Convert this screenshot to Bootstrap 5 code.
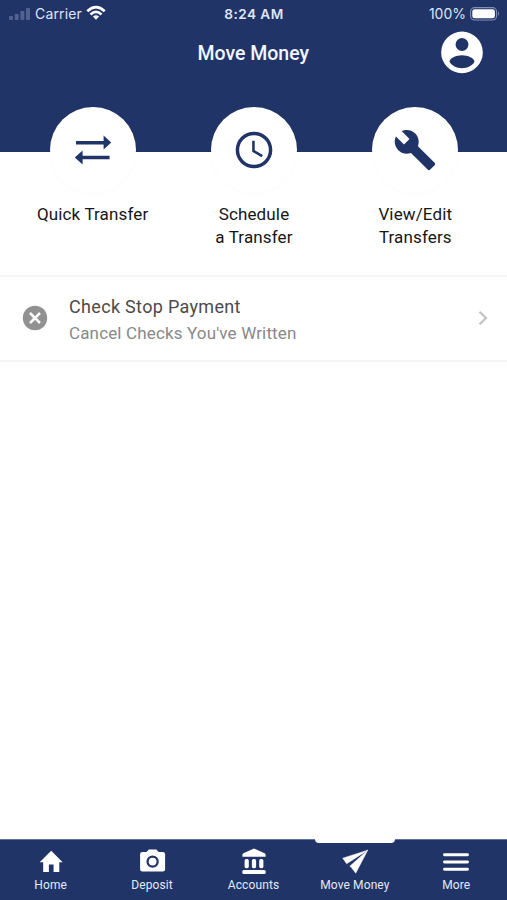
<!DOCTYPE html>
<html lang="en">
<head>
<meta charset="utf-8">
<meta name="viewport" content="width=device-width, initial-scale=1">
<title>Move Money</title>
<link rel="stylesheet" href="https://cdn.jsdelivr.net/npm/bootstrap@5.3.0/dist/css/bootstrap.min.css">
<style>
:root { --navy: #203468; }
body { font-family: Roboto, "Liberation Sans", sans-serif; color: #161616; }
svg { display: block; flex: none; }
.screen { height: 900px; background: #fff; overflow: hidden; }
.top-area { background: var(--navy); height: 151.5px; }
.status { height: 28px; font: 400 14px/28px Inter, sans-serif; color: #dfe5f5; padding: 0 7px 0 9px; }
.carrier { letter-spacing: .15px; }
.clock { font-weight: 600; font-size: 13.6px; letter-spacing: .45px; margin-right: 1px; }
.title-bar { height: 50px; padding: 0 20.5px 0 20px; }
.title-text { font-size: 19.5px; line-height: 49px; font-weight: 500; margin: 0; color: #f3f6ff; }
.actions { margin-top: -44.5px; padding: 0 11px 0 12px; height: 168px; }
.action { font-size: 17px; line-height: 22.5px; letter-spacing: .14px; }
.disc { width: 86px; height: 86px; color: var(--navy); box-shadow: 0 1px 5px rgba(0,0,0,.02); margin-bottom: 10px; }
.option { height: 87px; border-top: 2px solid #f5f5f5; border-bottom: 2px solid #f5f5f5; padding: 0 19px 0 22px; }
.option svg { margin-top: -1px; }
.option-text { padding: 2px 0 0 21px; }
.option-name { font-size: 18px; line-height: 26px; letter-spacing: .32px; color: #4b4b4b; }
.option-note { font-size: 17px; line-height: 26px; letter-spacing: .15px; color: #888; }
.tabs { height: 61.5px; background: var(--navy); border-top: 1px solid #63719a; font-size: 12px; line-height: 14px; letter-spacing: .1px; color: #e3e9f8; }
.tab { padding-top: 7px; }
.tab svg { margin-bottom: 3px; }
.marker { top: -2px; left: 50%; margin-left: -40px; width: 80px; height: 5.5px; background: #fff; border-radius: 0 0 4px 4px; }
</style>
</head>
<body>
<div class="screen d-flex flex-column">
  <header class="top-area flex-shrink-0">
    <div class="status row g-0">
      <div class="col d-flex align-items-center">
        <svg width="22" height="14" viewBox="0 0 22 14" fill="#52628e"><rect y="9" width="4" height="4" rx="1"/><rect x="5.7" y="7" width="4" height="6" rx="1"/><rect x="11.4" y="4" width="4" height="9" rx="1"/><rect x="17" y="1" width="4" height="12" rx="1"/></svg>
        <span class="carrier ms-1">Carrier</span>
        <svg class="ms-1 mb-1" width="20" height="15" viewBox="0 0 20 15" fill="none" stroke="#fff" stroke-width="2.6"><path d="M1.300 6.200Q10-1.900 18.700 6.200M4.500 9.500Q10 4.400 15.500 9.500"/><path d="M10 14.800L6.900 11.600Q10 9 13.100 11.600Z" fill="#fff" stroke="none"/></svg>
      </div>
      <div class="col-auto clock">8:24 AM</div>
      <div class="col d-flex align-items-center justify-content-end">
        <span>100%</span>
        <svg class="ms-1" width="30" height="15" viewBox="0 0 30 15"><rect x=".6" y=".6" width="26" height="12.4" rx="4" fill="none" stroke="#8290b4" stroke-width="1.1"/><rect x="2.3" y="2.3" width="22.6" height="9" rx="2.3" fill="#fff"/><path d="M28 4.600q2 2.200 0 4.400z" fill="#8290b4"/></svg>
      </div>
    </div>
    <div class="title-bar row g-0 align-items-center">
      <div class="col"></div>
      <h1 class="title-text col-auto">Move Money</h1>
      <div class="col d-flex justify-content-end">
        <svg width="50" height="50" viewBox="0 0 24 24" fill="#fff"><path fill-rule="evenodd" d="M12 1.700a10 10 0 1 0 0 20 10 10 0 0 0 0-20zM12 4.800a3.100 3.100 0 1 1 0 6.200A3.100 3.100 0 0 1 12 4.800zM12 13.100c2.800 0 6 1.400 6 3.100-1.100 1.900-3.400 3.100-6 3.100s-4.900-1.200-6-3.100c0-1.700 3.200-3.100 6-3.100z"/></svg>
      </div>
    </div>
  </header>

  <section class="actions row g-0 text-center flex-shrink-0">
    <div class="action col">
      <div class="disc bg-white rounded-circle d-flex align-items-center justify-content-center mx-auto">
        <svg width="38" height="30" viewBox="0 0 38 30" fill="currentColor"><path d="M2 5.900H29.600V.600L37.200 7.500 29.600 14.400V9.400H2zM35.600 24.200H8.600V29.400L.800 22.400 8.600 15.600V20.800H35.600z"/></svg>
      </div>
      Quick Transfer
    </div>
    <div class="action col">
      <div class="disc bg-white rounded-circle d-flex align-items-center justify-content-center mx-auto">
        <svg width="44" height="44" viewBox="0 0 24 24" fill="currentColor"><path d="M12 2a10 10 0 1 0 0 20 10 10 0 0 0 0-20zm0 18.100a8.100 8.100 0 1 1 0-16.200 8.100 8.100 0 0 1 0 16.200zM12.400 7H11v5.900l5.100 3.100.750-1.230-4.450-2.600z"/></svg>
      </div>
      Schedule<br>a Transfer
    </div>
    <div class="action col">
      <div class="disc bg-white rounded-circle d-flex align-items-center justify-content-center mx-auto">
        <svg width="44" height="44" viewBox="0 0 24 24" fill="currentColor"><path d="M22.700 19l-9.100-9.100c.900-2.300.400-5-1.500-6.900-2-2-5-2.400-7.400-1.300L9 6 6 9 1.600 4.700C.400 7.100.900 10.100 2.900 12.100c1.900 1.900 4.600 2.400 6.900 1.500l9.100 9.100c.400.400 1 .400 1.400 0l2.300-2.300c.500-.400.500-1.100.100-1.400z"/></svg>
      </div>
      View/Edit<br>Transfers
    </div>
  </section>

  <a class="option d-flex align-items-center text-decoration-none flex-shrink-0" href="#">
    <svg width="26" height="26" viewBox="0 0 26 26"><circle cx="13" cy="13" r="12.2" fill="#919191"/><path d="M8 8l10 10M18 8l-10 10" stroke="#fff" stroke-width="2.5"/></svg>
    <div class="option-text flex-grow-1">
      <div class="option-name">Check Stop Payment</div>
      <div class="option-note">Cancel Checks You've Written</div>
    </div>
    <svg width="10" height="16" viewBox="0 0 10 16" fill="none" stroke="#c2c2c2" stroke-width="2.2"><path d="M1.500 1.800L8 8 1.500 14.200"/></svg>
  </a>

  <nav class="tabs row g-0 text-center mt-auto flex-shrink-0">
    <div class="tab col">
      <svg class="mx-auto" width="28" height="28" viewBox="0 0 24 24" fill="#fff"><path d="M10.200 21.400v-6.300h4v6.300h4.900v-8.300h2.900L12.200 3.300 2.300 13.100h3v8.300z"/></svg>Home
    </div>
    <div class="tab col">
      <svg class="mx-auto" width="28" height="28" viewBox="-.6 -.4 28 28" fill="#fff"><path fill-rule="evenodd" d="M10.200 2h7.600l2.200 2.600h4.200a2.300 2.300 0 0 1 2.300 2.300v15a2.300 2.300 0 0 1-2.300 2.300H3.800a2.300 2.300 0 0 1-2.300-2.300v-15a2.300 2.300 0 0 1 2.300-2.300H8zM14 8a6.200 6.200 0 1 0 0 12.400A6.200 6.200 0 0 0 14 8z"/><circle cx="14" cy="14.200" r="3.900"/></svg>Deposit
    </div>
    <div class="tab col">
      <svg class="mx-auto" width="28" height="28" viewBox="0 -.8 28 28" fill="#fff"><path d="M14 .8L24.600 5.500Q25.600 6 25.600 7v2H2.400V7q0-1 1-1.500z"/><rect x="4.600" y="11.200" width="4.200" height="9.300" rx="1.700"/><rect x="11.900" y="11.200" width="4.200" height="9.300" rx="1.700"/><rect x="19.200" y="11.200" width="4.200" height="9.300" rx="1.700"/><rect x="2.300" y="22.300" width="23.400" height="3.900" rx="1.500"/></svg>Accounts
    </div>
    <div class="tab col position-relative">
      <span class="marker position-absolute"></span>
      <svg class="mx-auto" width="28" height="28" viewBox="0 0 28 28" fill="#fff" stroke="#fff" stroke-width=".5" stroke-linejoin="round"><path d="M26.700 3.200L1.700 11.200 5.700 16.700zM26.700 3.200L8.800 19.200 10.200 20.200 14.700 26.200z"/></svg>Move Money
    </div>
    <div class="tab col">
      <svg class="mx-auto" width="28" height="28" viewBox="0 0 28 28" fill="none" stroke="#fff" stroke-width="2.900" stroke-linecap="round"><path d="M2.500 7.800h23M2.500 15h23M2.500 22.200h23"/></svg>More
    </div>
  </nav>
</div>
<script src="https://cdn.jsdelivr.net/npm/bootstrap@5.3.0/dist/js/bootstrap.bundle.min.js"></script>
</body>
</html>
